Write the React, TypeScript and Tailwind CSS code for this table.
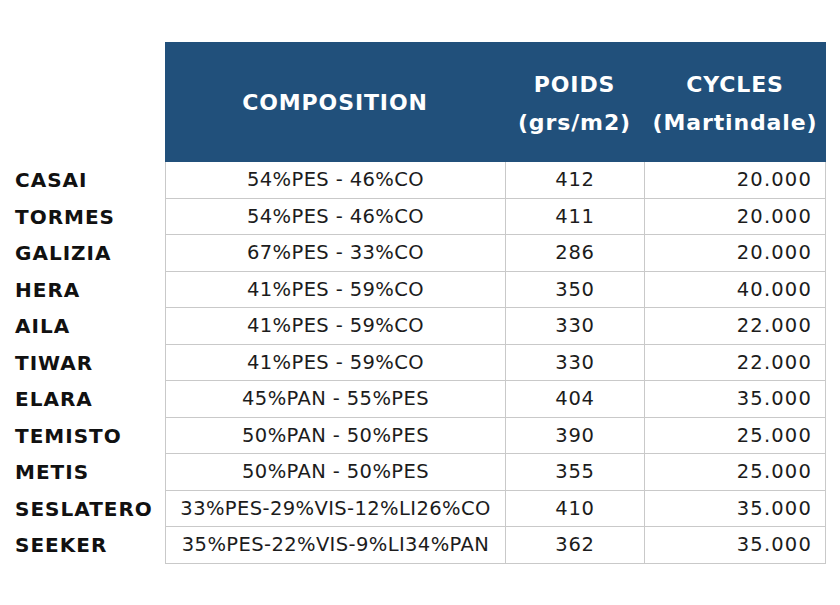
const rows = [
  ["CASAI", "54%PES - 46%CO", "412", "20.000"],
  ["TORMES", "54%PES - 46%CO", "411", "20.000"],
  ["GALIZIA", "67%PES - 33%CO", "286", "20.000"],
  ["HERA", "41%PES - 59%CO", "350", "40.000"],
  ["AILA", "41%PES - 59%CO", "330", "22.000"],
  ["TIWAR", "41%PES - 59%CO", "330", "22.000"],
  ["ELARA", "45%PAN - 55%PES", "404", "35.000"],
  ["TEMISTO", "50%PAN - 50%PES", "390", "25.000"],
  ["METIS", "50%PAN - 50%PES", "355", "25.000"],
  ["SESLATERO", "33%PES-29%VIS-12%LI26%CO", "410", "35.000"],
  ["SEEKER", "35%PES-22%VIS-9%LI34%PAN", "362", "35.000"],
];

const App = () => {
  return (
    <div className="w-[840px] h-[605px] bg-white pt-[42px] font-['DejaVu_Sans',sans-serif] text-[#1c1c1c]">
      <div className="grid grid-cols-[165px_340px_139px_182px]">
        <div />
        <div className="h-[120px] bg-[#21507b] flex items-center justify-center text-white text-[22px] font-bold tracking-[0.04em]">
          COMPOSITION
        </div>
        <div className="h-[120px] bg-[#21507b] flex flex-col items-center justify-center pt-[3px] text-white text-[22px] font-bold leading-[38px] tracking-[0.04em]">
          <span>POIDS</span>
          <span>(grs/m2)</span>
        </div>
        <div className="h-[120px] bg-[#21507b] flex flex-col items-center justify-center pt-[3px] text-white text-[22px] font-bold leading-[38px] tracking-[0.04em]">
          <span>CYCLES</span>
          <span>(Martindale)</span>
        </div>

        {rows.map(([name, comp, weight, cycles]) => (
          <div key={name} className="contents">
            <div className="h-[36.5px] flex items-center pl-[15px] text-[20px] font-bold text-[#111] tracking-[0.05em]">
              {name}
            </div>
            <div className="h-[36.5px] flex items-center justify-center text-[19.5px] tracking-[0.02em] border-l border-b border-[#c9c9c9]">
              {comp}
            </div>
            <div className="h-[36.5px] flex items-center justify-center text-[19.5px] tracking-[0.04em] border-l border-b border-[#c9c9c9]">
              {weight}
            </div>
            <div className="h-[36.5px] flex items-center justify-end pr-[13px] text-[19.5px] tracking-[0.06em] border-l border-r border-b border-[#c9c9c9]">
              {cycles}
            </div>
          </div>
        ))}
      </div>
    </div>
  );
};

export default App;
